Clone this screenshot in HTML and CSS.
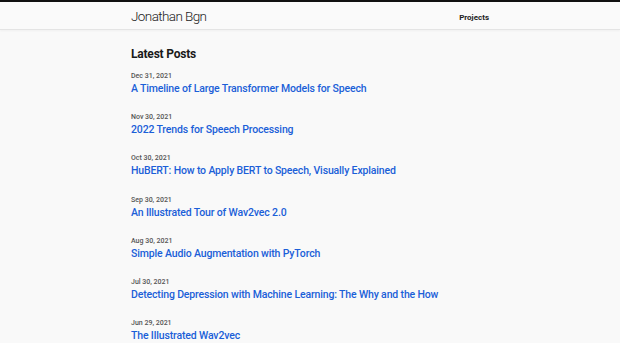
FILE: index.html
```html
<!DOCTYPE html>
<html lang="en">
<head>
  <meta charset="UTF-8" />
  <title>Jonathan Bgn</title>
  <meta name="viewport" content="width=device-width, initial-scale=1.0" />
  <link rel="stylesheet" href="styles.css">
</head>
<body>
  <header class="site-header">
    <div class="wrap header-row">
      <a class="brand" href="#">Jonathan Bgn</a>
      <nav class="nav"><a class="nav-link" href="#">Projects</a></nav>
    </div>
  </header>

  <main class="wrap">
    <h1 class="page-title">Latest Posts</h1>
    <ul class="posts">
      <li class="post">
        <div class="post-date">Dec 31, 2021</div>
        <a class="post-title" href="#">A Timeline of Large Transformer Models for Speech</a>
      </li>
      <li class="post">
        <div class="post-date">Nov 30, 2021</div>
        <a class="post-title" href="#">2022 Trends for Speech Processing</a>
      </li>
      <li class="post">
        <div class="post-date">Oct 30, 2021</div>
        <a class="post-title" href="#">HuBERT: How to Apply BERT to Speech, Visually Explained</a>
      </li>
      <li class="post">
        <div class="post-date">Sep 30, 2021</div>
        <a class="post-title" href="#">An Illustrated Tour of Wav2vec 2.0</a>
      </li>
      <li class="post">
        <div class="post-date">Aug 30, 2021</div>
        <a class="post-title" href="#">Simple Audio Augmentation with PyTorch</a>
      </li>
      <li class="post">
        <div class="post-date">Jul 30, 2021</div>
        <a class="post-title" href="#">Detecting Depression with Machine Learning: The Why and the How</a>
      </li>
      <li class="post">
        <div class="post-date">Jun 29, 2021</div>
        <a class="post-title" href="#">The Illustrated Wav2vec</a>
      </li>
    </ul>
  </main>
</body>
</html>
```

FILE: styles.css
```css
* { box-sizing: border-box; }
body {
  margin: 0;
  font-family: 'Roboto', sans-serif;
  background: #f9f9f9;
  color: #222;
}
a { text-decoration: none; }
.wrap {
  width: 358px;
  margin: 0 auto;
}
.site-header {
  background: #fafafa;
  border-top: 2px solid #111;
  border-bottom: 1px solid #e4e4e4;
  box-shadow: 0 1px 2px rgba(0,0,0,0.04);
}
.header-row {
  display: flex;
  justify-content: space-between;
  align-items: center;
  height: 27px;
}
.brand {
  font-size: 13.5px;
  font-weight: 300;
  color: #222;
  letter-spacing: -0.6px;
}
.nav { padding-bottom: 3px; }
.nav-link {
  font-size: 8px;
  font-weight: 700;
  color: #222;
}
.page-title {
  margin: 17px 0 0;
  font-size: 12px;
  font-weight: 700;
  color: #1a1a1a;
  letter-spacing: -0.2px;
}
.posts {
  list-style: none;
  margin: 0;
  padding: 0;
}
.post { margin-top: 16.2px; }
.post:first-child { margin-top: 10px; }
.post-date {
  font-size: 7px;
  font-weight: 500;
  color: #555;
  line-height: 10px;
}
.post-title {
  display: block;
  font-size: 10.5px;
  font-weight: 500;
  color: #1b5fd8;
  letter-spacing: -0.15px;
  line-height: 15px;
}
```
